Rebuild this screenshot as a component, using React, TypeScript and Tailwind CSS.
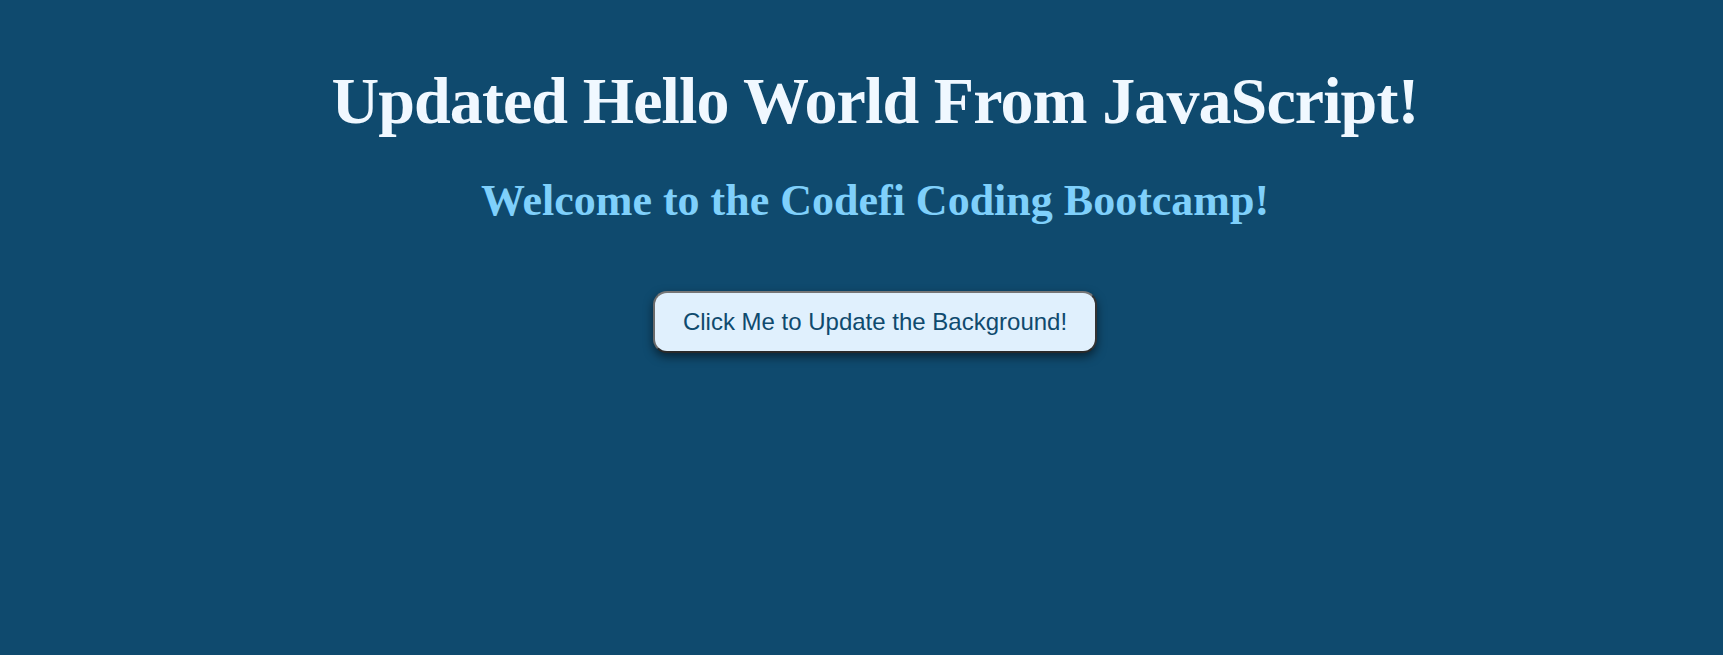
export default function App() {
  return (
    <div className="min-h-[655px] w-full bg-[#0f4a6e] flex flex-col items-center pt-[61px] pl-[27px]">
      <h1 className="text-[66px] leading-[80px] tracking-[-0.9px] font-bold text-[#f0f8ff] font-['Liberation_Serif',serif]">Updated Hello World From JavaScript!</h1>
      <h2 className="mt-[36px] text-[44px] leading-[48px] font-bold text-[#7fd0fb] font-['Liberation_Serif',serif]">Welcome to the Codefi Coding Bootcamp!</h2>
      <button className="mt-[66px] w-[444px] h-[62px] rounded-[14px] border-2 border-t-[#767676] border-l-[#6a6a6a] border-r-[#333333] border-b-[#2a2a2a] bg-[#e0f0fd] text-[#0f4a6e] text-[24px] font-['Liberation_Sans',Arial,sans-serif] shadow-[0_4px_10px_rgba(0,0,0,0.5)]">
        Click Me to Update the Background!
      </button>
    </div>
  );
}
